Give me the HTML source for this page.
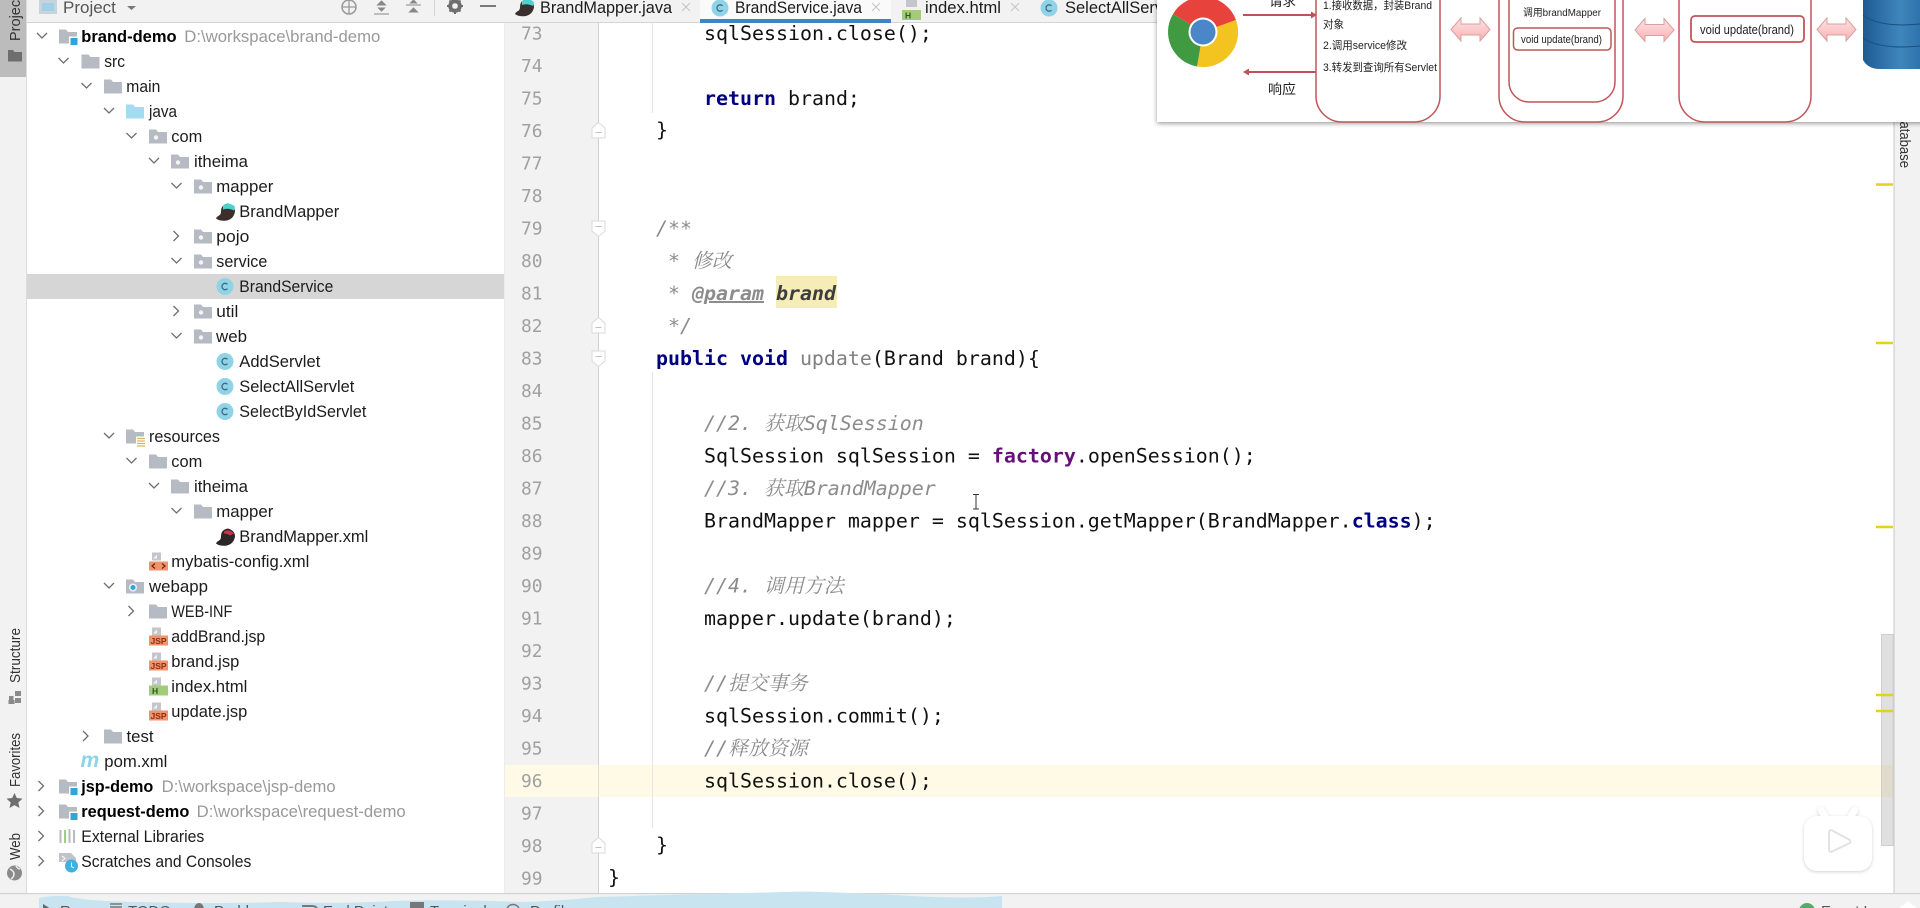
<!DOCTYPE html>
<html><head><meta charset="utf-8"><title>BrandService.java</title>
<style>
html,body{margin:0;padding:0;width:1920px;height:908px;overflow:hidden;background:#fff}
svg{display:block;filter:blur(.3px)}
text{white-space:pre}
.t{font:16.5px "Liberation Sans","Noto Sans CJK SC",sans-serif;fill:#1c1c1c}
.b{font-weight:bold;fill:#000}
.p{fill:#999}
.s{font:14.500px "Liberation Sans",sans-serif;fill:#333}
.l{font:15px "Liberation Sans",sans-serif;fill:#555}
.c{font:19.93px "DejaVu Sans Mono","Noto Sans CJK SC",monospace;fill:#111}
.n{font:17.9px "DejaVu Sans Mono",monospace;fill:#a0a0a0}
.k{fill:#000080;font-weight:bold}
.f{fill:#660e7a;font-weight:bold}
.m{fill:#8c8c8c;font-style:italic;font-family:"DejaVu Sans Mono","Noto Serif CJK SC",monospace}
.d{font-family:"Liberation Sans","Noto Sans CJK SC",sans-serif;fill:#222}
</style></head><body>
<svg width="1920" height="908" viewBox="0 0 1920 908" xmlns="http://www.w3.org/2000/svg">
<defs>
<path id="f" d="M0-7h7l2 2.5h9V7H0z" fill="#b6bac2"/>
<g id="pk"><use href="#f"/><circle cx="7" cy="1" r="2.2" fill="#f4f4f4"/></g>
<path id="jf" d="M0-7h7l2 2.5h9V7H0z" fill="#a3dbf0"/>
<g id="mod"><use href="#f"/><rect x="10" y="0" width="9" height="9" fill="#fff"/><rect x="11.5" y="1.5" width="7" height="7" fill="#2ea6d8"/></g>
<g id="res"><use href="#f"/><rect x="10" y="0" width="9" height="10" fill="#fff"/><path d="M11 2h8M11 4.5h8M11 7h8M11 9.5h8" stroke="#d6b860" stroke-width="1.3"/></g>
<g id="wb"><use href="#f"/><circle cx="7" cy="1" r="4" fill="#e8f4fa"/><circle cx="7" cy="1" r="2.5" fill="#2ea6d8"/></g>
<g id="cl"><circle cx="9" cy="0" r="8.5" fill="#8fd3e8"/><path d="M11.5-2.200A3.200 3.200 0 1 0 11.5 2.200" fill="none" stroke="#3c6a7a" stroke-width="1.3"/></g>
<g id="doc"><path d="M3-9h9v8H3z" fill="#c4c6cb"/><path d="M4-3l4-4v4z" fill="#f2f2f2"/></g>
<g id="jsp"><use href="#doc"/><rect x="0" y="-1" width="19" height="10" fill="#f0926a"/><text x="1.5" y="7.5" font-family="Liberation Sans" font-size="8.5" font-weight="bold" fill="#8a2f12">JSP</text></g>
<g id="htm"><use href="#doc"/><rect x="0" y="-1" width="19" height="10" fill="#a3cc7a"/><text x="3" y="7.5" font-family="Liberation Sans" font-size="8.5" font-weight="bold" fill="#2f5a1a">H</text></g>
<g id="xml"><use href="#doc"/><rect x="0" y="0" width="19" height="9" fill="#f0926a"/><path d="M6 2L3 4.5 6 7M13 2l3 2.5L13 7" fill="none" stroke="#6a2510" stroke-width="1.2"/></g>
<g id="bm"><path d="M0 7Q4 10 11 9Q18 7 19 0Q19-6 12-8Q5-7 5 0Q5 3 3 4Q1 5 0 7z" fill="#3a2f2d"/><path d="M7-6Q13-10 19-5L18-1Q12-4 7-2z" fill="#4fd0cf"/></g>
<g id="bx"><path d="M0 7Q4 10 11 9Q18 7 19 0Q19-6 12-8Q5-7 5 0Q5 3 3 4Q1 5 0 7z" fill="#2c2626"/><path d="M8-5Q13-8 18-3L14-1Q11-3 8-3z" fill="#c8334a"/></g>
<path id="cd" d="M-5-3L0 2 5-3" fill="none" stroke="#6e6e6e" stroke-width="1.3"/>
<path id="cr" d="M-2-5L3 0-2 5" fill="none" stroke="#6e6e6e" stroke-width="1.3"/>
<g id="fs"><path d="M-6.500-8h13v10l-6.500 5.5-6.500-5.5z" fill="#fff" stroke="#dadada"/><path d="M-3-2.500h6" stroke="#c0c0c0"/></g>
<g id="fe"><path d="M-6.500 8h13v-10l-6.500-5.5-6.500 5.5z" fill="#fff" stroke="#dadada"/><path d="M-3 2.500h6" stroke="#c0c0c0"/></g>
<linearGradient id="pk1" x1="0" y1="0" x2="0" y2="1"><stop offset="0" stop-color="#fde4e4"/><stop offset="1" stop-color="#fbb0b2"/></linearGradient>
<path id="da" d="M0 11.5L10 0v6h19V0l10 11.5L29 23v-6H10v6z" fill="url(#pk1)" stroke="#d8a0a0" stroke-width="1"/>
<linearGradient id="db" x1="0" y1="0" x2="1" y2="0"><stop offset="0" stop-color="#1d5a92"/><stop offset=".6" stop-color="#3f86bd"/><stop offset="1" stop-color="#2a6ea6"/></linearGradient>
<filter id="sh" x="-5%" y="-20%" width="110%" height="140%"><feDropShadow dx="0" dy="1.5" stdDeviation="2.5" flood-color="#000" flood-opacity=".4"/></filter>
</defs>

<rect width="1920" height="908" fill="#fff"/>

<!-- left stripe -->
<rect x="0" y="0" width="26.5" height="893" fill="#f2f2f2"/>
<rect x="0" y="0" width="26.5" height="77" fill="#bcbcbc"/>
<rect x="26" y="0" width="1" height="893" fill="#dcdcdc"/>
<text class="s" transform="translate(20 41) rotate(-90)">Project</text>
<path d="M8 50h5l1.500 2H22v9.500H8z" fill="#6e6e6e"/>
<text class="s" transform="translate(20 683)rotate(-90)" textLength="55" lengthAdjust="spacingAndGlyphs">Structure</text>
<path d="M9 696h4.500v4.500H9zM15 691h6v5h-6zM15 698h6v5h-6zM8.500 700h6v4h-6z" fill="#8a8a8a"/>
<text class="s" transform="translate(20 787)rotate(-90)" textLength="54" lengthAdjust="spacingAndGlyphs">Favorites</text>
<path d="M14.500 793l2.300 5 5.700.6-4.200 3.900 1.200 5.500-5-2.900-5 2.900 1.200-5.500-4.200-3.900 5.700-.6z" fill="#6e6e6e"/>
<text class="s" transform="translate(20 860)rotate(-90)" textLength="27" lengthAdjust="spacingAndGlyphs">Web</text>
<circle cx="14.5" cy="873" r="7.5" fill="#8a8a8a"/><path d="M10 869q4 2 4 5t-3 5M16 866q2 3 4 3" stroke="#eee" fill="none" stroke-width="1.5"/>

<!-- project header -->
<rect x="27" y="0" width="478" height="23" fill="#f2f2f2"/>
<rect x="27" y="22" width="478" height="1" fill="#d4d4d4"/>
<rect x="39" y="0" width="18" height="14" fill="#c8d4dc"/><rect x="42" y="3" width="12" height="8" fill="#9fd0e8"/>
<text class="t" x="63" y="13" style="font-size:17px;fill:#555">Project</text>
<path d="M127 6h9l-4.500 4z" fill="#777"/>
<circle cx="349" cy="7" r="7" fill="none" stroke="#999" stroke-width="1.5"/><path d="M349 0v14M342 7h14" stroke="#999" stroke-width="1.3"/>
<path d="M374 14h15M381.500 1l4 4h-8zM381.500 11l-3-3h6z" fill="#888" stroke="#888" stroke-width="1"/>
<path d="M406 5h15M413.500 0l3 3h-6zM413.500 8l4 4h-8z" fill="#888" stroke="#888" stroke-width="1"/>
<rect x="434" y="0" width="1" height="16" fill="#d4d4d4"/>
<circle cx="455" cy="6" r="5" fill="none" stroke="#6e6e6e" stroke-width="3.5"/><path d="M455-2v16M447 6h16M449.500.5l11 11M460.500.5l-11 11" stroke="#6e6e6e" stroke-width="2"/><circle cx="455" cy="6" r="2.8" fill="#f2f2f2"/>
<rect x="480" y="5" width="16" height="2" fill="#7a7a7a"/>

<!-- tree -->
<rect x="27" y="274" width="477" height="25" fill="#d6d6d6"/>
<rect x="504" y="23" width="1" height="870" fill="#ececec"/>

<g>
<use href="#cd" x="42" y="36"/><use href="#mod" x="59" y="36.5"/><text class="t b" x="81.3" y="42" textLength="95.3" lengthAdjust="spacingAndGlyphs">brand-demo</text><text class="t p" x="184.3" y="42" textLength="196" lengthAdjust="spacingAndGlyphs">D:\workspace\brand-demo</text>
<use href="#cd" x="63.5" y="61"/><use href="#f" x="81.5" y="61.5"/><text class="t" x="104.3" y="67" textLength="20.7" lengthAdjust="spacingAndGlyphs">src</text>
<use href="#cd" x="86.5" y="86"/><use href="#f" x="104" y="86.5"/><text class="t" x="126.3" y="92" textLength="34" lengthAdjust="spacingAndGlyphs">main</text>
<use href="#cd" x="109" y="111"/><use href="#jf" x="126" y="111.5"/><text class="t" x="149" y="117" textLength="28" lengthAdjust="spacingAndGlyphs">java</text>
<use href="#cd" x="131.5" y="136"/><use href="#pk" x="149" y="136.5"/><text class="t" x="171.3" y="142" textLength="31" lengthAdjust="spacingAndGlyphs">com</text>
<use href="#cd" x="154" y="161"/><use href="#pk" x="171" y="161.5"/><text class="t" x="194" y="167" textLength="54" lengthAdjust="spacingAndGlyphs">itheima</text>
<use href="#cd" x="176.5" y="186"/><use href="#pk" x="194" y="186.5"/><text class="t" x="216.3" y="192" textLength="57" lengthAdjust="spacingAndGlyphs">mapper</text>
<use href="#bm" x="216" y="211.5"/><text class="t" x="239.3" y="217" textLength="100" lengthAdjust="spacingAndGlyphs">BrandMapper</text>
<use href="#cr" x="175.5" y="236"/><use href="#pk" x="194" y="236.5"/><text class="t" x="216.3" y="242" textLength="33" lengthAdjust="spacingAndGlyphs">pojo</text>
<use href="#cd" x="176.5" y="261"/><use href="#pk" x="194" y="261.5"/><text class="t" x="216.3" y="267" textLength="51" lengthAdjust="spacingAndGlyphs">service</text>
<use href="#cl" x="216" y="286.5"/><text class="t" x="239.3" y="292" textLength="94" lengthAdjust="spacingAndGlyphs">BrandService</text>
<use href="#cr" x="175.5" y="311"/><use href="#pk" x="194" y="311.5"/><text class="t" x="216.3" y="317" textLength="22" lengthAdjust="spacingAndGlyphs">util</text>
<use href="#cd" x="176.5" y="336"/><use href="#pk" x="194" y="336.5"/><text class="t" x="216" y="342" textLength="31" lengthAdjust="spacingAndGlyphs">web</text>
<use href="#cl" x="216" y="361.5"/><text class="t" x="239.3" y="367" textLength="81" lengthAdjust="spacingAndGlyphs">AddServlet</text>
<use href="#cl" x="216" y="386.5"/><text class="t" x="239.3" y="392" textLength="115" lengthAdjust="spacingAndGlyphs">SelectAllServlet</text>
<use href="#cl" x="216" y="411.5"/><text class="t" x="239.3" y="417" textLength="127" lengthAdjust="spacingAndGlyphs">SelectByIdServlet</text>
<use href="#cd" x="109" y="436"/><use href="#res" x="126" y="436.5"/><text class="t" x="149" y="442" textLength="71" lengthAdjust="spacingAndGlyphs">resources</text>
<use href="#cd" x="131.5" y="461"/><use href="#f" x="149" y="461.5"/><text class="t" x="171.3" y="467" textLength="31" lengthAdjust="spacingAndGlyphs">com</text>
<use href="#cd" x="154" y="486"/><use href="#f" x="171" y="486.5"/><text class="t" x="194" y="492" textLength="54" lengthAdjust="spacingAndGlyphs">itheima</text>
<use href="#cd" x="176.5" y="511"/><use href="#f" x="194" y="511.5"/><text class="t" x="216.3" y="517" textLength="57" lengthAdjust="spacingAndGlyphs">mapper</text>
<use href="#bx" x="216" y="536.5"/><text class="t" x="239.3" y="542" textLength="129" lengthAdjust="spacingAndGlyphs">BrandMapper.xml</text>
<use href="#xml" x="149" y="561.5"/><text class="t" x="171.3" y="567" textLength="138" lengthAdjust="spacingAndGlyphs">mybatis-config.xml</text>
<use href="#cd" x="109" y="586"/><use href="#wb" x="126" y="586.5"/><text class="t" x="149" y="592" textLength="59" lengthAdjust="spacingAndGlyphs">webapp</text>
<use href="#cr" x="130.5" y="611"/><use href="#f" x="149" y="611.5"/><text class="t" x="171.3" y="617" textLength="61" lengthAdjust="spacingAndGlyphs">WEB-INF</text>
<use href="#jsp" x="149" y="636.5"/><text class="t" x="171.3" y="642" textLength="94" lengthAdjust="spacingAndGlyphs">addBrand.jsp</text>
<use href="#jsp" x="149" y="661.5"/><text class="t" x="171.3" y="667" textLength="68" lengthAdjust="spacingAndGlyphs">brand.jsp</text>
<use href="#htm" x="149" y="686.5"/><text class="t" x="171.3" y="692" textLength="76" lengthAdjust="spacingAndGlyphs">index.html</text>
<use href="#jsp" x="149" y="711.5"/><text class="t" x="171.3" y="717" textLength="76" lengthAdjust="spacingAndGlyphs">update.jsp</text>
<use href="#cr" x="85" y="736"/><use href="#f" x="104" y="736.5"/><text class="t" x="126.5" y="742" textLength="27" lengthAdjust="spacingAndGlyphs">test</text>
<text x="80.5" y="767" font-family="Liberation Sans" font-size="21" font-weight="bold" font-style="italic" fill="#8fd3e8">m</text><text class="t" x="104.3" y="767" textLength="63" lengthAdjust="spacingAndGlyphs">pom.xml</text>
<use href="#cr" x="40.5" y="786"/><use href="#mod" x="59" y="786.5"/><text class="t b" x="81.3" y="792" textLength="72" lengthAdjust="spacingAndGlyphs">jsp-demo</text><text class="t p" x="161.7" y="792" textLength="174" lengthAdjust="spacingAndGlyphs">D:\workspace\jsp-demo</text>
<use href="#cr" x="40.5" y="811"/><use href="#mod" x="59" y="811.5"/><text class="t b" x="81.3" y="817" textLength="108" lengthAdjust="spacingAndGlyphs">request-demo</text><text class="t p" x="196.7" y="817" textLength="209" lengthAdjust="spacingAndGlyphs">D:\workspace\request-demo</text>
<use href="#cr" x="40.5" y="836"/><path d="M60.5 830v13M65 830v13M69.5 829v14M74 830v13" stroke="#b6bac2" stroke-width="2"/><path d="M65 830v13" stroke="#9ccf80" stroke-width="2"/><text class="t" x="81.3" y="842" textLength="123" lengthAdjust="spacingAndGlyphs">External Libraries</text>
<use href="#cr" x="40.5" y="861"/><path d="M59 853h12l5 5v4H59z" fill="#c0c3c9"/><path d="M62 856l3 2.5-3 2.5" stroke="#fff" fill="none"/><circle cx="71.5" cy="866" r="6.5" fill="#3fb0e0"/><path d="M71.5 862.5v4l2.5 1.5" stroke="#fff" fill="none"/><text class="t" x="81.3" y="867" textLength="170" lengthAdjust="spacingAndGlyphs">Scratches and Consoles</text>
</g>

<!-- editor -->
<rect x="505" y="23" width="93" height="870" fill="#f2f2f2"/>
<rect x="598" y="23" width="1" height="870" fill="#d0d0d0"/>
<rect x="505" y="765" width="1389" height="32" fill="#fffae6"/>
<rect x="598" y="765" width="1" height="32" fill="#e2e0d2"/>
<rect x="652" y="23" width="1" height="90" fill="#e6e6e6"/>
<rect x="652" y="372" width="1" height="456" fill="#e6e6e6"/>
<rect x="776" y="276" width="61" height="32" fill="#f6ecb8"/>

<g>
<text class="n" x="521" y="39.5">73</text><text class="n" x="521" y="72">74</text><text class="n" x="521" y="104.5">75</text><text class="n" x="521" y="137">76</text><text class="n" x="521" y="169.5">77</text><text class="n" x="521" y="202">78</text><text class="n" x="521" y="234.5">79</text><text class="n" x="521" y="267">80</text><text class="n" x="521" y="299.5">81</text><text class="n" x="521" y="332">82</text><text class="n" x="521" y="364.5">83</text><text class="n" x="521" y="397">84</text><text class="n" x="521" y="429.5">85</text><text class="n" x="521" y="462">86</text><text class="n" x="521" y="494.5">87</text><text class="n" x="521" y="527">88</text><text class="n" x="521" y="559.5">89</text><text class="n" x="521" y="592">90</text><text class="n" x="521" y="624.5">91</text><text class="n" x="521" y="657">92</text><text class="n" x="521" y="689.5">93</text><text class="n" x="521" y="722">94</text><text class="n" x="521" y="754.5">95</text><text class="n" x="521" y="787">96</text><text class="n" x="521" y="819.5">97</text><text class="n" x="521" y="852">98</text><text class="n" x="521" y="884.5">99</text>
</g>

<use href="#fe" x="598.5" y="130"/>
<use href="#fs" x="598.5" y="229"/>
<use href="#fe" x="598.5" y="325"/>
<use href="#fs" x="598.5" y="359"/>
<use href="#fe" x="598.5" y="845"/>

<text class="c" x="704" y="40">sqlSession.close();</text>
<text class="c" x="704" y="105"><tspan class="k">return</tspan> brand;</text>
<text class="c" x="656" y="136.5">}</text>
<text class="c m" x="656" y="235">/**</text>
<text class="c m" x="668" y="267.5">* 修改</text>
<text class="c m" x="668" y="300">* <tspan font-weight="bold" text-decoration="underline">@param</tspan> <tspan font-weight="bold" fill="#3d3d3d">brand</tspan></text>
<text class="c m" x="668" y="332.5">*/</text>
<text class="c" x="656" y="365"><tspan class="k">public void</tspan> <tspan fill="#808080">update</tspan>(Brand brand){</text>
<text class="c m" x="704" y="430">//2. 获取SqlSession</text>
<text class="c" x="704" y="462.5">SqlSession sqlSession = <tspan class="f">factory</tspan>.openSession();</text>
<text class="c m" x="704" y="495">//3. 获取BrandMapper</text>
<text class="c" x="704" y="527.5">BrandMapper mapper = sqlSession.getMapper(BrandMapper.<tspan class="k">class</tspan>);</text>
<text class="c m" x="704" y="592.5">//4. 调用方法</text>
<text class="c" x="704" y="625">mapper.update(brand);</text>
<text class="c m" x="704" y="690">//提交事务</text>
<text class="c" x="704" y="722.5">sqlSession.commit();</text>
<text class="c m" x="704" y="755">//释放资源</text>
<text class="c" x="704" y="787.5">sqlSession.close();</text>
<text class="c" x="656" y="851.5">}</text>
<text class="c" x="608" y="884">}</text>

<!-- I-beam -->
<path d="M973 494.5h6M976 494.5v14.5M973 509h6" stroke="#333" fill="none" stroke-width="1"/>

<!-- tabs -->
<rect x="505" y="0" width="660" height="23" fill="#f2f2f2"/>
<rect x="505" y="22" width="660" height="1" fill="#d4d4d4"/>
<rect x="700" y="0" width="191" height="19" fill="#fafafa"/>
<rect x="700" y="19" width="191" height="4" fill="#4083c9"/>
<use href="#bm" x="515" y="7"/>
<text class="t" x="540" y="13" textLength="132" lengthAdjust="spacingAndGlyphs">BrandMapper.java</text>
<path d="M682 3l8 8M690 3l-8 8" stroke="#c4c4c4" stroke-width="1"/>
<use href="#cl" x="711" y="8"/>
<text class="t" x="735" y="13" textLength="127" lengthAdjust="spacingAndGlyphs">BrandService.java</text>
<path d="M872 3l8 8M880 3l-8 8" stroke="#c4c4c4" stroke-width="1"/>
<rect x="906" y="-2" width="11" height="9" fill="#c4c6cb"/><rect x="902" y="10" width="19" height="10" fill="#a3cc7a"/><text x="905" y="18.5" font-family="Liberation Sans" font-size="8.5" font-weight="bold" fill="#2f5a1a">H</text>
<text class="t" x="925" y="13" textLength="76" lengthAdjust="spacingAndGlyphs">index.html</text>
<path d="M1011 3l8 8M1019 3l-8 8" stroke="#c4c4c4" stroke-width="1"/>
<use href="#cl" x="1040" y="8"/>
<text class="t" x="1065" y="13">SelectAllServlet.java</text>

<!-- scrollbar & right stripe -->
<rect x="1881.5" y="634.5" width="11.5" height="211" fill="#000" fill-opacity=".12" stroke="#cfcfcf"/>
<path d="M1876 184.5h17M1876 343h17M1876 527h17M1876 695h17M1876 711h17" stroke="#e3d020" stroke-width="2.5"/>
<rect x="1894" y="0" width="26" height="893" fill="#f2f2f2"/>
<rect x="1893.5" y="0" width="1" height="893" fill="#c8c8c8"/>
<text class="s" transform="translate(1900 168) rotate(90)" text-anchor="end" textLength="56" lengthAdjust="spacingAndGlyphs">Database</text>

<!-- bilibili -->
<g filter="drop-shadow(0 1.5px 1.5px rgba(0,0,0,.18))">
<path d="M1825 816l-4-6M1851 816l4-6" stroke="#fff" stroke-width="7" stroke-linecap="round"/>
<rect x="1804" y="816" width="68" height="55" rx="13" fill="#fff"/>
</g>
<path d="M1829 832.5q0-3 3-2l17 9q3 2 0 4l-17 8q-3 1-3-2z" fill="#fff" stroke="#e2e2e2" stroke-width="2"/>

<!-- status bar -->
<rect x="0" y="893" width="1920" height="15" fill="#f2f2f2"/>
<rect x="0" y="893" width="1920" height="1.2" fill="#d2d2d2"/>
<path d="M39 908V898Q52 895 68 896Q80 901 140 902Q220 904 280 902Q340 904 393 901Q450 899 520 902Q560 901 596 897Q700 894 807 891.5Q860 893 912 896Q970 899 1002 896V908z" fill="#c8e4f0"/>
<g>
<path d="M43 904l8 5h-8z" fill="#666"/><text class="l" x="60" y="916">Run</text>
<path d="M110 904h12M110 907h12" stroke="#777" stroke-width="1.5"/><text class="l" x="128" y="916">TODO</text>
<ellipse cx="199" cy="910" rx="5" ry="7" fill="#777"/><text class="l" x="214" y="916">Problems</text>
<path d="M302 906h10q5 0 5 4" fill="none" stroke="#777" stroke-width="2"/><text class="l" x="323" y="916">End Points</text>
<rect x="410" y="902" width="14" height="9" fill="#777"/><text class="l" x="430" y="916">Terminal</text>
<circle cx="513" cy="911" r="6.5" fill="none" stroke="#777" stroke-width="1.5"/><text class="l" x="530" y="916">Profiler</text>
<circle cx="1807" cy="911" r="8" fill="#59a869"/><text class="l" x="1821" y="916">Event Log</text>
</g>
<path d="M1900 908l8-7 8 7z" fill="#fff"/>

<!-- overlay diagram -->
<rect x="1157" y="-10" width="780" height="132" fill="#fff" filter="url(#sh)"/>
<path d="M1203 32L1173 14A35 35 0 0 1 1236 20z" fill="#e8423c"/>
<path d="M1203 32L1236 20A35 35 0 0 1 1197 66.5z" fill="#f3c41f"/>
<path d="M1203 32L1197 66.5A35 35 0 0 1 1173 14z" fill="#3f9a41"/>
<circle cx="1203" cy="32" r="14.5" fill="#fff"/><circle cx="1203" cy="32" r="12.5" fill="#4a86c8"/>

<path d="M1243 15h72" stroke="#c0505a" stroke-width="2"/><path d="M1311 11.5l6 3.5-6 3.5z" fill="#c0505a"/>
<path d="M1245 72h72" stroke="#c0505a" stroke-width="2"/><path d="M1249 68.5l-6 3.5 6 3.5z" fill="#c0505a"/>
<text class="d" x="1269" y="6" font-size="13" textLength="27" lengthAdjust="spacingAndGlyphs">请求</text>
<text class="d" x="1268" y="94" font-size="13.5" textLength="28" lengthAdjust="spacingAndGlyphs">响应</text>

<rect x="1316" y="-60" width="124" height="182" rx="26" fill="#fff" stroke="#c0555a" stroke-width="1.5"/>
<text class="d" x="1323" y="9" font-size="11" textLength="109" lengthAdjust="spacingAndGlyphs">1.接收数据，封装Brand</text>
<text class="d" x="1323" y="28" font-size="11" textLength="21" lengthAdjust="spacingAndGlyphs">对象</text>
<text class="d" x="1323" y="49" font-size="11" textLength="84" lengthAdjust="spacingAndGlyphs">2.调用service修改</text>
<text class="d" x="1323" y="71" font-size="11" textLength="114" lengthAdjust="spacingAndGlyphs">3.转发到查询所有Servlet</text>

<use href="#da" x="1451" y="18"/>

<rect x="1499" y="-60" width="124" height="182" rx="26" fill="#fff" stroke="#c0555a" stroke-width="1.5"/>
<rect x="1509" y="-60" width="106" height="162" rx="20" fill="#fff" stroke="#c0555a" stroke-width="1.5"/>
<text class="d" x="1523" y="16" font-size="10" textLength="78" lengthAdjust="spacingAndGlyphs">调用brandMapper</text>
<rect x="1513.5" y="28" width="97.5" height="22" rx="4" fill="#fff" stroke="#c0555a" stroke-width="1.5"/>
<text class="d" x="1521" y="43" font-size="11" textLength="81" lengthAdjust="spacingAndGlyphs">void update(brand)</text>

<use href="#da" x="1635" y="18.5"/>

<rect x="1679" y="-60" width="132" height="182" rx="26" fill="#fff" stroke="#c0555a" stroke-width="1.5"/>
<rect x="1691" y="16" width="113" height="26" rx="4" fill="#fff" stroke="#c0555a" stroke-width="1.8"/>
<text class="d" x="1700" y="34" font-size="12.5" textLength="94" lengthAdjust="spacingAndGlyphs">void update(brand)</text>

<use href="#da" x="1817" y="18"/>

<path d="M1863-5V60Q1868 69 1880 69H1925V-5z" fill="url(#db)"/>
<path d="M1863 15Q1880 28 1920 24M1863 38Q1880 50 1920 46" stroke="#1a4f80" fill="none" stroke-width="1"/>
</svg>
</body></html>
